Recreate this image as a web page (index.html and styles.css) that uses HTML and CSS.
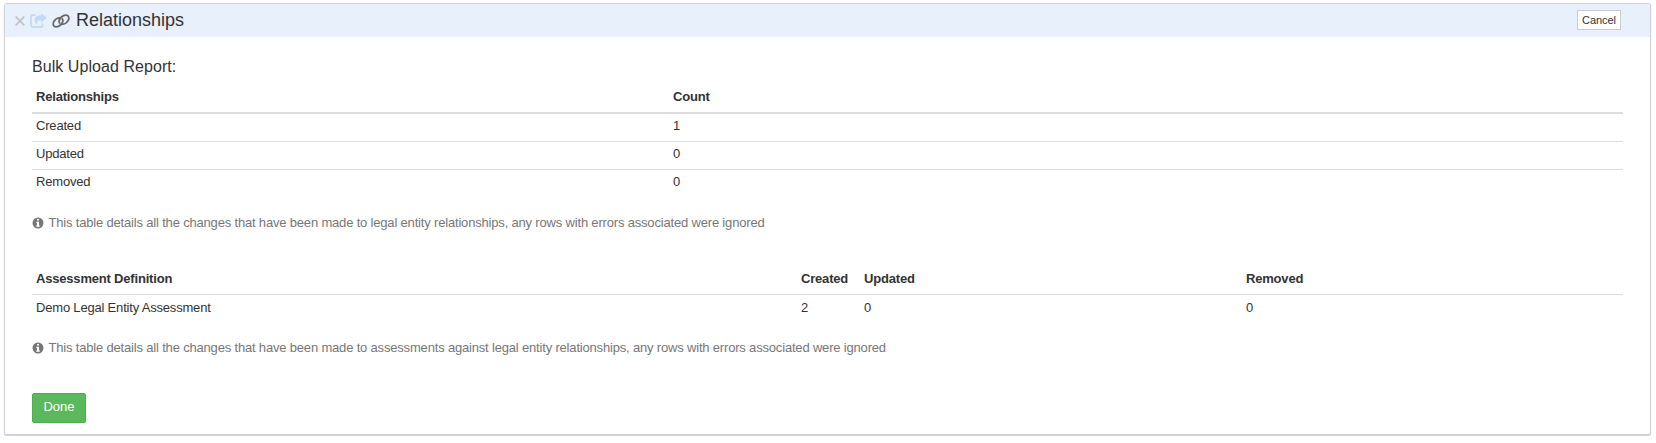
FILE: index.html
```html
<!DOCTYPE html>
<html lang="en">
<head>
<meta charset="utf-8">
<title>Relationships</title>
<link rel="stylesheet" href="styles.css">
</head>
<body>
<main class="panel">
  <header class="panel-header">
    <svg class="icon-close" viewBox="0 0 10 10"><path d="M.7.7l8.600 8.600M9.300.7L.7 9.300"/></svg>
    <svg class="icon-share" viewBox="0 0 17 15"><path class="frame" d="M5.500 2H3.200Q1 2 1 4.200v7.600Q1 14 3.200 14h7.300q2.200 0 2.200-2.200V10.500"/><path class="arrow" d="M11 0l6 4.800-6 5V7.200C8.200 7 6.700 8 7.200 11.500 2.800 8.500 3.500 2.200 11 2.200z"/></svg>
    <svg class="icon-link" viewBox="0 0 18 14"><path d="M8.700 4.200C6.500 3.300 3.500 4.800 1.900 7.400C.2 10.300 1.400 12.900 4.200 12.900C7.200 12.900 10.700 9.800 10.900 6.900C11 5.700 10.500 4.900 9.700 4.500"/><path d="M9.300 9.800C11.500 10.700 14.500 9.200 16.100 6.600C17.800 3.700 16.600 1.100 13.800 1.100C10.800 1.100 7.300 4.200 7.100 7.100C7 8.300 7.500 9.100 8.300 9.500"/></svg>
    <h1 class="title">Relationships</h1>
    <button class="btn-cancel" type="button">Cancel</button>
  </header>
  <section class="content">
    <h2 class="report-title">Bulk Upload Report:</h2>
    <table class="table summary">
      <thead><tr><th>Relationships</th><th>Count</th></tr></thead>
      <tbody>
        <tr><td>Created</td><td>1</td></tr>
        <tr><td>Updated</td><td>0</td></tr>
        <tr><td>Removed</td><td>0</td></tr>
      </tbody>
    </table>
    <p class="note"><svg class="icon-info" viewBox="0 0 12 12"><circle cx="6" cy="6" r="5.500"/><path d="M5 2h2v1.500H5zM4.300 4.700H7v3.800h.8v1.200H4.200V8.500H5V5.900h-.7z"/></svg>This table details all the changes that have been made to legal entity relationships, any rows with errors associated were ignored</p>
    <table class="table assessments">
      <colgroup><col class="col-definition"><col class="col-created"><col class="col-updated"><col></colgroup>
      <thead><tr><th>Assessment Definition</th><th>Created</th><th>Updated</th><th>Removed</th></tr></thead>
      <tbody><tr><td>Demo Legal Entity Assessment</td><td>2</td><td>0</td><td>0</td></tr></tbody>
    </table>
    <p class="note"><svg class="icon-info" viewBox="0 0 12 12"><circle cx="6" cy="6" r="5.500"/><path d="M5 2h2v1.500H5zM4.300 4.700H7v3.800h.8v1.200H4.200V8.500H5V5.900h-.7z"/></svg>This table details all the changes that have been made to assessments against legal entity relationships, any rows with errors associated were ignored</p>
    <button class="btn-done" type="button">Done</button>
  </section>
</main>
</body>
</html>
```
FILE: styles.css
```css
* { box-sizing: border-box; }
body {
  margin: 0;
  padding: 3px 5px 0 4px;
  background: #fff;
  color: #333;
  font: 13px/19px "Liberation Sans", Arial, sans-serif;
}
.panel {
  height: 433px;
  border: 1px solid #d2d2da;
  border-bottom-width: 2px;
  border-radius: 3px;
  box-shadow: 0 1px 2px rgba(0, 0, 0, .12);
  overflow: hidden;
}
.panel-header {
  display: flex;
  align-items: center;
  height: 33px;
  padding: 0 29px 0 10px;
  background: #e8f0fc;
}
.icon-close { width: 10px; height: 10px; fill: none; stroke: #c0c5cc; stroke-width: 1.8; }
.icon-share { width: 17px; height: 15px; margin-left: 5px; }
.icon-share .frame { fill: none; stroke: #c3dbf0; stroke-width: 1.8; }
.icon-share .arrow { fill: #c3dbf0; }
.icon-link { width: 18px; height: 14px; margin-left: 5px; fill: none; stroke: #666; stroke-width: 1.8; overflow: visible; }
.title { margin: 0 auto 2px 6px; font-size: 18px; font-weight: 400; line-height: 20px; }
.btn-cancel {
  width: 44px;
  height: 20px;
  margin-bottom: 1px;
  padding: 0;
  border: 1px solid #ccc;
  background: #fff;
  color: #333;
  font: 11px/17px "Liberation Sans", Arial, sans-serif;
  letter-spacing: -.05px;
}
.content { padding: 18px 27px 0; }
.report-title { margin: 0; height: 27px; font-size: 16px; font-weight: 400; line-height: 23px; letter-spacing: .06px; }
.table { width: 100%; border-collapse: separate; border-spacing: 0; table-layout: fixed; letter-spacing: -.19px; }
.table th, .table td { padding: 4px 5px; text-align: left; vertical-align: top; }
.table th:first-child, .table td:first-child { padding-left: 4px; }
.table td { height: 28px; padding-top: 2px; border-top: 1px solid #ddd; }
.summary th { height: 32px; padding-top: 5px; border-bottom: 2px solid #ddd; }
.summary th:first-child { width: 636px; }
.summary tbody tr:first-child td { height: 27px; border-top: 0; }
.assessments { margin-top: 33px; }
.assessments th { height: 29px; }
.assessments td { padding-top: 3px; }
.col-definition { width: 764px; }
.col-created { width: 63px; }
.col-updated { width: 382px; }
.note { display: flex; align-items: center; margin: 16px 0 0; color: #777; letter-spacing: -.179px; }
.icon-info { width: 12px; height: 12px; margin: 1px 4.5px 0 0; fill: #777; }
.icon-info path { fill: #fff; }
.btn-done {
  display: block;
  width: 54px;
  height: 30px;
  margin-top: 36px;
  padding: 0 0 3px;
  border: 1px solid #4cae4c;
  border-radius: 2px;
  background: #5cb85c;
  color: #fff;
  font: 13px/19px "Liberation Sans", Arial, sans-serif;
}
```
